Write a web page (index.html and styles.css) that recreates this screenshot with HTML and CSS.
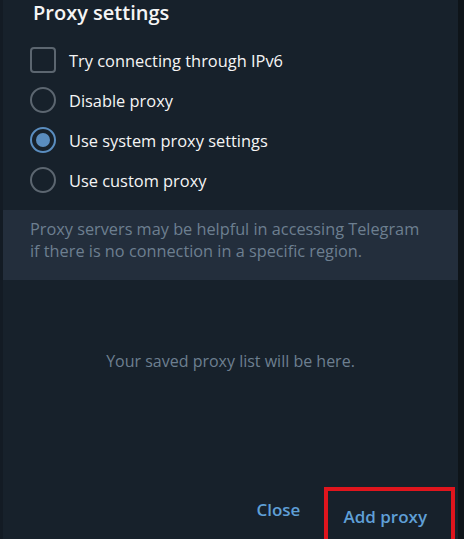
FILE: index.html
```html
<!DOCTYPE html>
<html lang="en">
<head>
    <meta charset="UTF-8">
    <title>Proxy settings</title>
    <link rel="stylesheet" href="styles.css">
</head>
<body>
    <div class="window">
        <div class="edge-left"></div>
        <div class="box">
            <h1 class="title">Proxy settings</h1>

            <div class="options">
                <label class="option">
                    <span class="check"></span>
                    Try connecting through IPv6
                </label>
                <label class="option">
                    <span class="radio"></span>
                    Disable proxy
                </label>
                <label class="option">
                    <span class="radio checked"></span>
                    Use system proxy settings
                </label>
                <label class="option">
                    <span class="radio"></span>
                    Use custom proxy
                </label>
            </div>

            <div class="about">
                Proxy servers may be helpful in accessing Telegram<br>
                if there is no connection in a specific region.
            </div>

            <div class="empty">Your saved proxy list will be here.</div>

            <div class="buttons">
                <button class="btn">Close</button>
                <button class="btn marked">Add proxy</button>
            </div>
        </div>
        <div class="edge-right"></div>
    </div>
</body>
</html>
```

FILE: styles.css
```css
* {
    margin: 0;
    padding: 0;
    box-sizing: border-box;
    font-family: 'Open Sans', sans-serif;
}

body {
    width: 464px;
    height: 539px;
    overflow: hidden;
    background: #0e1419;
    color: #f5f5f5;
}

.window {
    display: flex;
    height: 539px;
}

.edge-left {
    width: 3px;
    background: #131b24;
}

.edge-right {
    width: 6px;
    background: #0e1419;
}

.box {
    flex: 1;
    background: #17212b;
    display: flex;
    flex-direction: column;
}

.title {
    font-size: 20px;
    font-weight: 600;
    line-height: 26px;
    padding-left: 30px;
    color: #f5f5f5;
}

.options {
    display: flex;
    flex-direction: column;
    padding: 14px 0 0 27px;
}

.option {
    display: flex;
    align-items: center;
    gap: 13px;
    height: 40px;
    font-size: 16.4px;
    color: #f5f5f5;
}

.check {
    width: 26px;
    height: 26px;
    border: 2px solid #5c6670;
    border-radius: 4px;
}

.radio {
    width: 26px;
    height: 26px;
    border: 2px solid #5c6670;
    border-radius: 50%;
    display: flex;
    align-items: center;
    justify-content: center;
}

.radio.checked {
    border-color: #5a8dbf;
}

.radio.checked::after {
    content: '';
    width: 14px;
    height: 14px;
    border-radius: 50%;
    background: #5a8dbf;
}

.about {
    margin-top: 10px;
    background: #232e3c;
    padding: 8px 0 18px 27px;
    font-size: 16.3px;
    line-height: 22px;
    color: #6d7f90;
}

.empty {
    flex: 1;
    text-align: center;
    font-size: 16px;
    color: #6d7f90;
    padding-top: 70px;
}

.buttons {
    display: flex;
    justify-content: flex-end;
    align-items: flex-start;
    height: 52px;
}

.btn {
    background: transparent;
    border: none;
    color: #5f9fd6;
    font-size: 17px;
    font-weight: 600;
    padding: 11px 24px 11px 16px;
}

.btn.marked {
    border: 4px solid #e0151d;
    border-bottom: none;
    padding: 8px 24px 13px 15px;
    height: 60px;
    margin-right: 3px;
}
```
